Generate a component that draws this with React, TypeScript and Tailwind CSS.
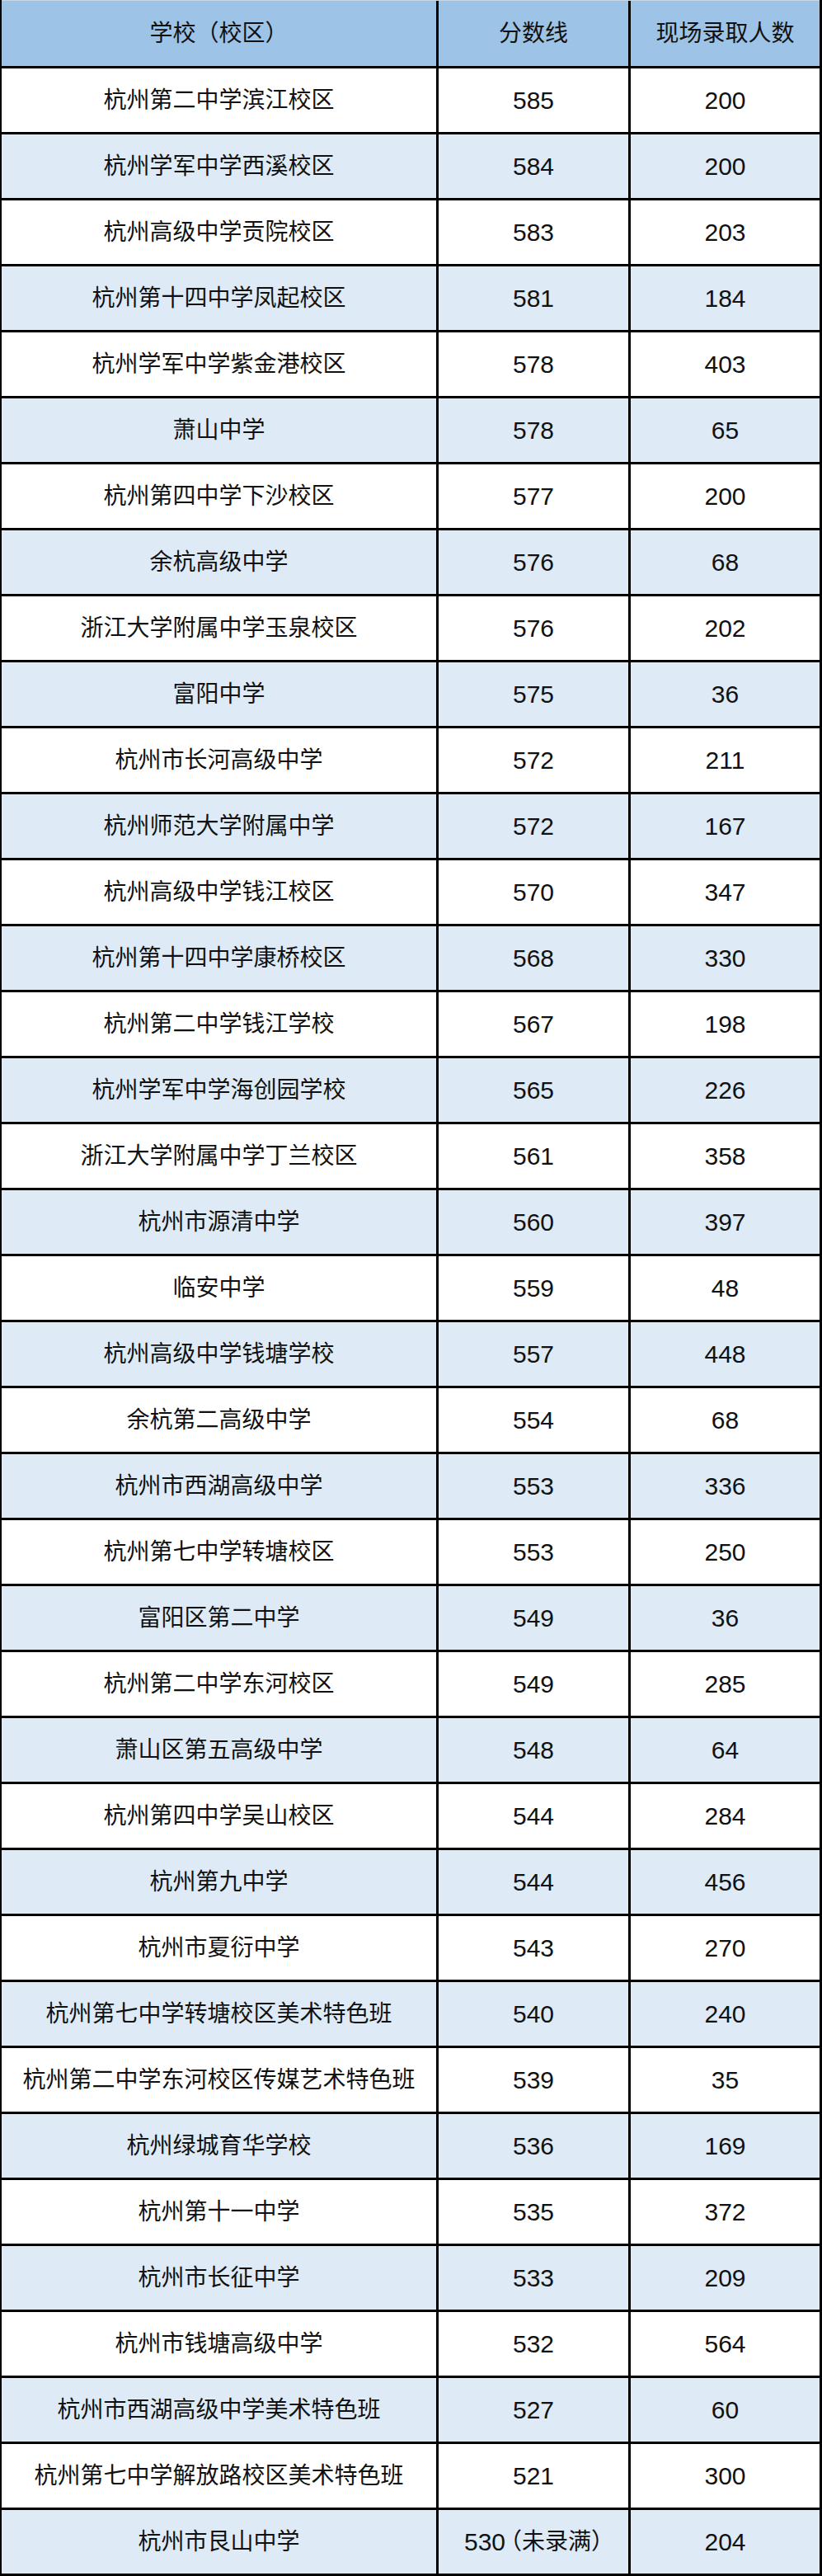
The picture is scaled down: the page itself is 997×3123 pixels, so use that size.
const rows: [string, string, string][] = [
  ["杭州第二中学滨江校区", "585", "200"],
  ["杭州学军中学西溪校区", "584", "200"],
  ["杭州高级中学贡院校区", "583", "203"],
  ["杭州第十四中学凤起校区", "581", "184"],
  ["杭州学军中学紫金港校区", "578", "403"],
  ["萧山中学", "578", "65"],
  ["杭州第四中学下沙校区", "577", "200"],
  ["余杭高级中学", "576", "68"],
  ["浙江大学附属中学玉泉校区", "576", "202"],
  ["富阳中学", "575", "36"],
  ["杭州市长河高级中学", "572", "211"],
  ["杭州师范大学附属中学", "572", "167"],
  ["杭州高级中学钱江校区", "570", "347"],
  ["杭州第十四中学康桥校区", "568", "330"],
  ["杭州第二中学钱江学校", "567", "198"],
  ["杭州学军中学海创园学校", "565", "226"],
  ["浙江大学附属中学丁兰校区", "561", "358"],
  ["杭州市源清中学", "560", "397"],
  ["临安中学", "559", "48"],
  ["杭州高级中学钱塘学校", "557", "448"],
  ["余杭第二高级中学", "554", "68"],
  ["杭州市西湖高级中学", "553", "336"],
  ["杭州第七中学转塘校区", "553", "250"],
  ["富阳区第二中学", "549", "36"],
  ["杭州第二中学东河校区", "549", "285"],
  ["萧山区第五高级中学", "548", "64"],
  ["杭州第四中学吴山校区", "544", "284"],
  ["杭州第九中学", "544", "456"],
  ["杭州市夏衍中学", "543", "270"],
  ["杭州第七中学转塘校区美术特色班", "540", "240"],
  ["杭州第二中学东河校区传媒艺术特色班", "539", "35"],
  ["杭州绿城育华学校", "536", "169"],
  ["杭州第十一中学", "535", "372"],
  ["杭州市长征中学", "533", "209"],
  ["杭州市钱塘高级中学", "532", "564"],
  ["杭州市西湖高级中学美术特色班", "527", "60"],
  ["杭州第七中学解放路校区美术特色班", "521", "300"],
  ["杭州市艮山中学", "530（未录满）", "204"],
];

const cell = "flex items-center justify-center whitespace-nowrap";

// digits a touch larger than the CJK text, like the original sheet
const Score = ({ value }: { value: string }) => {
  const m = value.match(/^(\d+)(.*)$/);
  if (!m) return <>{value}</>;
  return (
    <>
      <span className="text-[30px]">{m[1]}</span>
      {m[2] && <span className="ml-[6px] [font-feature-settings:'halt']">{m[2]}</span>}
    </>
  );
};

const App = () => {
  return (
    <div
      className="w-[997px] bg-white text-[28px] text-[#111111]"
      style={{ fontFamily: '"Liberation Sans", "Noto Sans CJK SC", sans-serif' }}
    >
      <div className="border-l-2 border-r-[3px] border-b-[3px] border-black">
        {/* Header */}
        <div className="grid h-[80px] grid-cols-[527px_233px_1fr] border-t border-[#c9d6e3] bg-[#9dc3e6]">
          <div className={cell}>学校（校区）</div>
          <div className={`${cell} border-l-[3px] border-black`}>分数线</div>
          <div className={`${cell} border-l-[3px] border-black`}>现场录取人数</div>
        </div>

        {/* Rows */}
        {rows.map(([school, score, count], i) => (
          <div
            key={school}
            className={`grid h-[80px] grid-cols-[527px_233px_1fr] border-t-[3px] border-black ${
              i % 2 === 1 ? "bg-[#deebf7]" : "bg-white"
            }`}
          >
            <div className={cell}>{school}</div>
            <div className={`${cell} border-l-[3px] border-black`}>
              <Score value={score} />
            </div>
            <div className={`${cell} border-l-[3px] border-black`}>
              <Score value={count} />
            </div>
          </div>
        ))}
      </div>
    </div>
  );
};

export default App;
